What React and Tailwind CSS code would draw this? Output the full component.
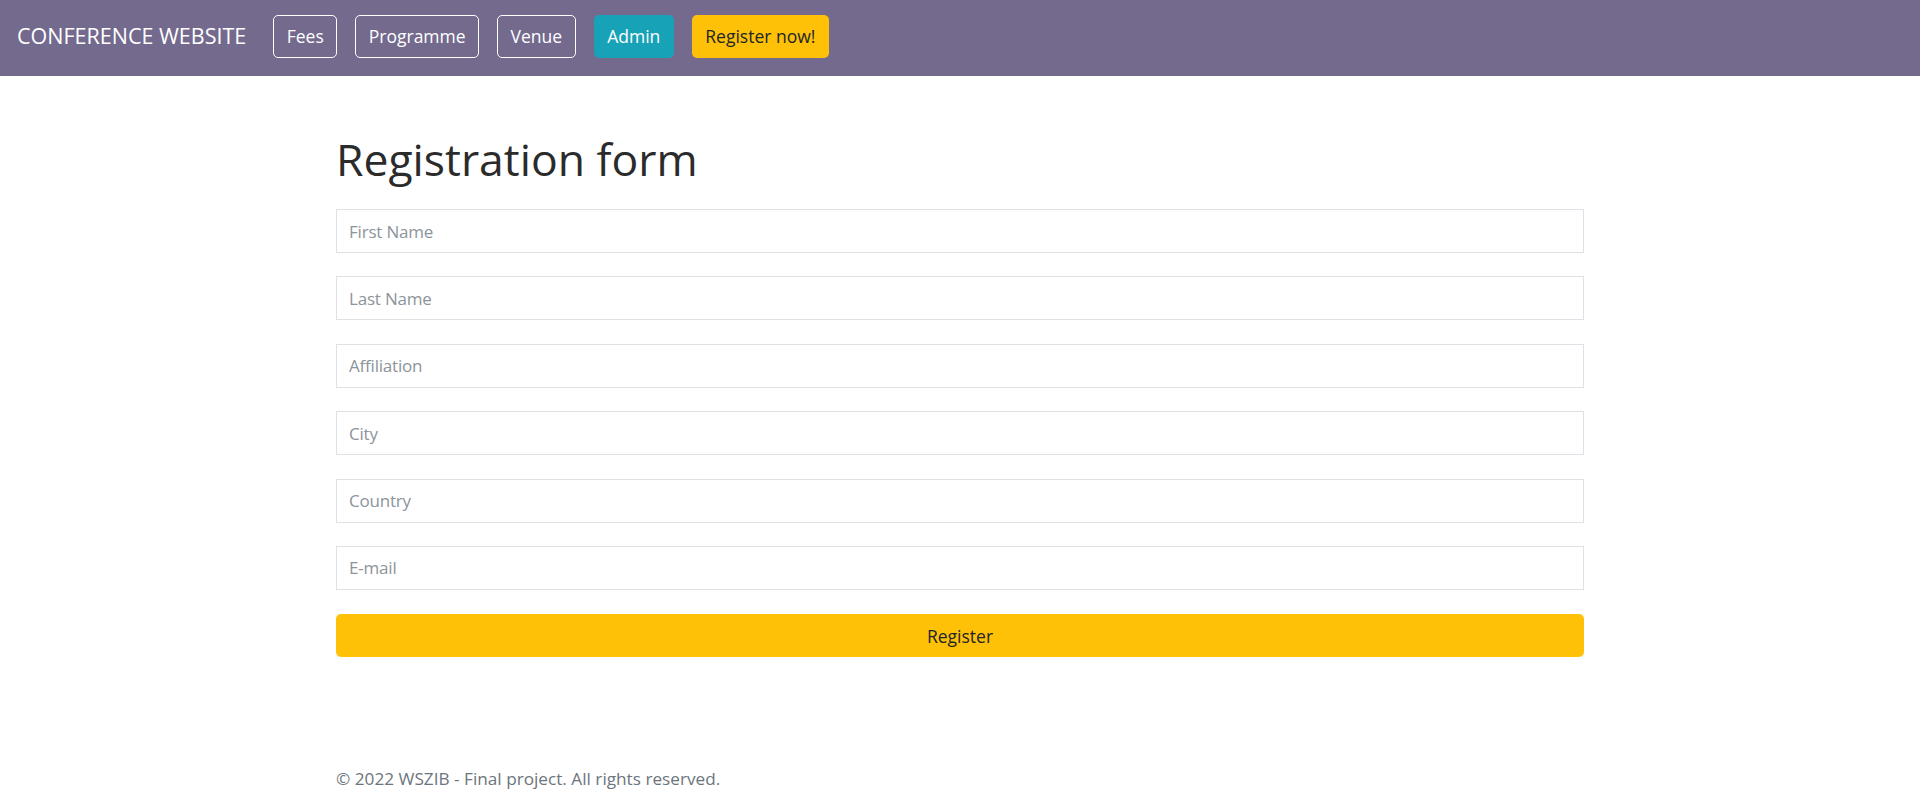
const navLinks = ['Fees', 'Programme', 'Venue']

const fields = ['First Name', 'Last Name', 'Affiliation', 'City', 'Country', 'E-mail']

export default function App() {
  return (
    <div className="min-h-screen bg-white text-[#212529] font-['Open_Sans',sans-serif]">
      {/* Navbar */}
      <nav className="h-[76px] bg-[#736a8e] flex items-center pl-[17px] pb-[4px]">
        <span className="text-white text-[21.5px] mr-[27px]">CONFERENCE WEBSITE</span>
        <div className="flex items-center gap-[18px]">
          {navLinks.map((l) => (
            <button
              key={l}
              className="h-[43px] px-[12.5px] border border-white rounded-[5px] text-white text-[17.5px]"
            >
              {l}
            </button>
          ))}
          <button className="h-[43px] px-[13.5px] rounded-[5px] bg-[#17a2b8] text-white text-[17.5px]">
            Admin
          </button>
          <button className="h-[43px] px-[13.5px] rounded-[5px] bg-[#ffc107] text-[#212529] text-[17.5px]">
            Register now!
          </button>
        </div>
      </nav>

      {/* Form */}
      <main className="w-[1248px] mx-auto pt-[55px]">
        <h1 className="text-[44.5px] leading-[55px] font-normal text-[#2b2b2b] mb-[23px]">
          Registration form
        </h1>
        <form className="flex flex-col" onSubmit={(e) => e.preventDefault()}>
          {fields.map((f) => (
            <input
              key={f}
              placeholder={f}
              className="h-[44px] mb-[23.4px] border border-[#dee2e6] px-[12px] text-[17px] tracking-[-0.2px] placeholder:text-[#8d949a] outline-none"
            />
          ))}
          <button
            type="submit"
            className="h-[43px] mt-[1px] rounded-[5px] bg-[#ffc107] text-[#212529] text-[17.5px]"
          >
            Register
          </button>
        </form>
      </main>

      {/* Footer */}
      <footer className="w-[1248px] mx-auto pt-[109px] pb-[20px]">
        <p className="text-[17.2px] text-[#6c757d]">
          © 2022 WSZIB - Final project. All rights reserved.
        </p>
      </footer>
    </div>
  )
}
